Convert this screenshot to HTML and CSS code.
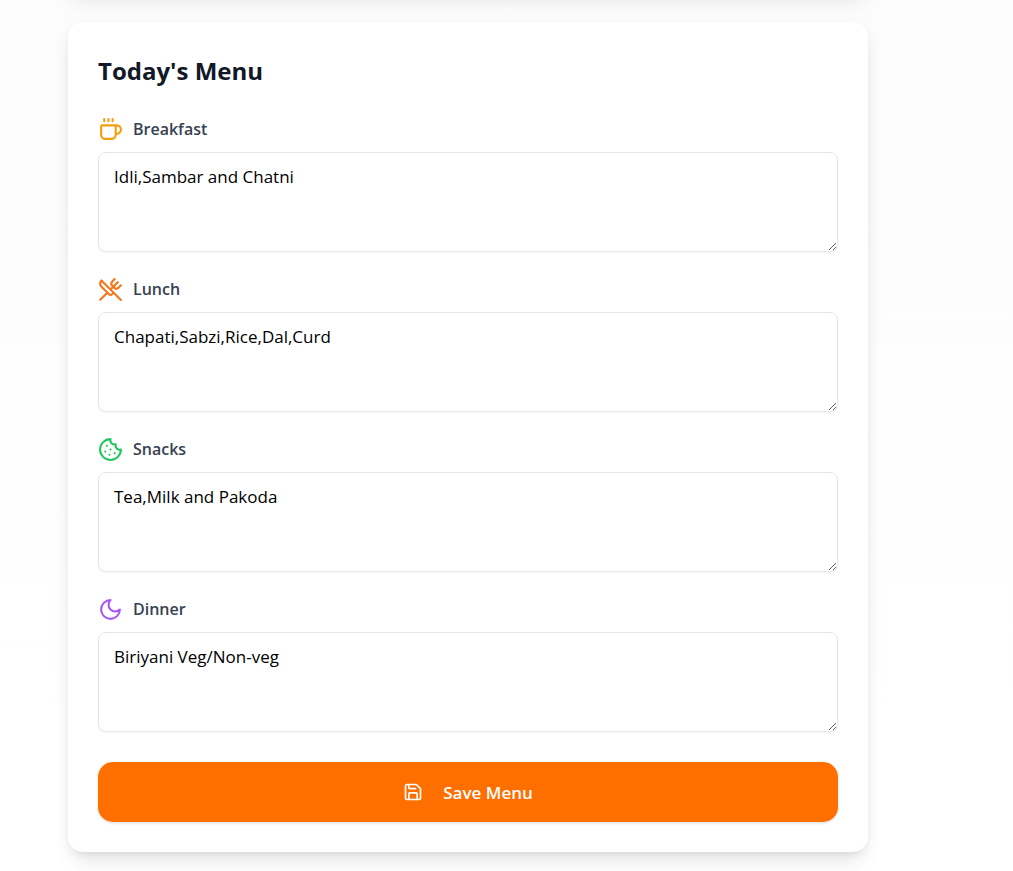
FILE: index.html
```html
<!DOCTYPE html>
<html lang="en">
<head>
    <meta charset="UTF-8">
    <meta name="viewport" content="width=device-width, initial-scale=1.0">
    <title>Today's Menu</title>
    <link rel="stylesheet" href="styles.css">
</head>
<body>

    <main>
        <!-- Card above the menu, scrolled out of view -->
        <section class="card card-above"></section>

        <!-- Menu form -->
        <section class="card">
            <h2>Today's Menu</h2>
            <form class="menu-form">
                <div class="meals">
                    <div class="meal">
                        <label for="breakfast">
                            <svg class="icon breakfast" viewBox="0 0 24 24"><path d="M10 2v2"/><path d="M14 2v2"/><path d="M6 2v2"/><path d="M16 8a1 1 0 0 1 1 1v8a4 4 0 0 1-4 4H7a4 4 0 0 1-4-4V9a1 1 0 0 1 1-1h14a4 4 0 1 1 0 8h-1"/></svg>
                            Breakfast
                        </label>
                        <textarea id="breakfast" name="breakfast" spellcheck="false">Idli,Sambar and Chatni</textarea>
                    </div>

                    <div class="meal">
                        <label for="lunch">
                            <svg class="icon lunch" viewBox="0 0 24 24"><path d="m16 2-2.3 2.3a3 3 0 0 0 0 4.2l1.8 1.8a3 3 0 0 0 4.2 0L22 8"/><path d="M15 15 3.3 3.3a4.2 4.2 0 0 0 0 6l7.3 7.3c.7.7 2 .7 2.8 0L15 15Zm0 0 7 7"/><path d="m2.1 21.8 6.4-6.3"/><path d="m19 5-7 7"/></svg>
                            Lunch
                        </label>
                        <textarea id="lunch" name="lunch" spellcheck="false">Chapati,Sabzi,Rice,Dal,Curd</textarea>
                    </div>

                    <div class="meal">
                        <label for="snacks">
                            <svg class="icon snacks" viewBox="0 0 24 24"><path d="M12 2a10 10 0 1 0 10 10 4 4 0 0 1-5-5 4 4 0 0 1-5-5"/><path d="M8.5 8.5v.01"/><path d="M16 15.5v.01"/><path d="M12 12v.01"/><path d="M11 17v.01"/><path d="M7 14v.01"/></svg>
                            Snacks
                        </label>
                        <textarea id="snacks" name="snacks" spellcheck="false">Tea,Milk and Pakoda</textarea>
                    </div>

                    <div class="meal">
                        <label for="dinner">
                            <svg class="icon dinner" viewBox="0 0 24 24"><path d="M12 3a6 6 0 0 0 9 9 9 9 0 1 1-9-9Z"/></svg>
                            Dinner
                        </label>
                        <textarea id="dinner" name="dinner" spellcheck="false">Biriyani Veg/Non-veg</textarea>
                    </div>
                </div>

                <button type="button" class="save-btn">
                    <svg class="icon icon-small" viewBox="0 0 24 24"><path d="M15.2 3a2 2 0 0 1 1.4.6l3.8 3.8a2 2 0 0 1 .6 1.4V19a2 2 0 0 1-2 2H5a2 2 0 0 1-2-2V5a2 2 0 0 1 2-2z"/><path d="M17 21v-7a1 1 0 0 0-1-1H8a1 1 0 0 0-1 1v7"/><path d="M7 3v4a1 1 0 0 0 1 1h7"/></svg>
                    Save Menu
                </button>
            </form>
        </section>
    </main>

</body>
</html>
```
FILE: styles.css
```css
/* Basic Reset */
* {
    margin: 0;
    padding: 0;
    box-sizing: border-box;
    font-family: "Segoe UI", "Open Sans", "Noto Sans", sans-serif;
}

body {
    background: linear-gradient(to bottom, #fcfcfc, #fff 720px);
    color: #111827;
    overflow-x: hidden;
}

main {
    display: flex;
    flex-direction: column;
    gap: 30px;
    max-width: 868px;
    padding: 0 0 19px 68px;
}

/* Cards */
.card {
    background-color: #fff;
    border-radius: 15px;
    padding: 30px;
    box-shadow: 0 12px 19px -4px rgba(0, 0, 0, 0.1), 0 5px 8px -5px rgba(0, 0, 0, 0.1), 0 0 15px rgba(0, 0, 0, 0.03);
}

.card-above {
    margin-top: -68px;
}

.card h2 {
    font-size: 24px;
    line-height: 37px;
    font-weight: 700;
    margin-bottom: 28px;
}

/* Menu form */
.menu-form {
    display: flex;
    flex-direction: column;
    gap: 30px;
}

.meals {
    display: flex;
    flex-direction: column;
    gap: 25px;
}

.meal {
    display: flex;
    flex-direction: column;
    gap: 10px;
}

.meal label {
    display: flex;
    align-items: center;
    gap: 10px;
    color: #374151;
    font-size: 16px;
    line-height: 25px;
    font-weight: 600;
}

.meal textarea {
    display: block;
    width: 100%;
    height: 100px;
    padding: 11px 15px;
    border: 1px solid #e5e7eb;
    border-radius: 8px;
    background-color: #fff;
    box-shadow: 0 1px 2px rgba(0, 0, 0, 0.05);
    color: #000;
    font-size: 17px;
    line-height: 25px;
    resize: vertical;
}

/* Icons */
.icon {
    width: 25px;
    height: 25px;
    flex-shrink: 0;
    fill: none;
    stroke: currentColor;
    stroke-width: 2;
    stroke-linecap: round;
    stroke-linejoin: round;
}

.icon-small {
    width: 20px;
    height: 20px;
}

.breakfast {
    color: #f59e0b;
}

.lunch {
    color: #f97316;
}

.snacks {
    color: #22c55e;
}

.dinner {
    color: #a855f7;
}

.save-btn {
    display: flex;
    align-items: center;
    justify-content: center;
    gap: 20px;
    width: 100%;
    height: 60px;
    border: none;
    border-radius: 15px;
    background-color: #ff6f00;
    box-shadow: 0 1px 3px rgba(0, 0, 0, 0.15);
    color: #fff;
    font-size: 17px;
    font-weight: 600;
    cursor: pointer;
}

.save-btn:hover {
    background-color: #f56a00;
}
```
